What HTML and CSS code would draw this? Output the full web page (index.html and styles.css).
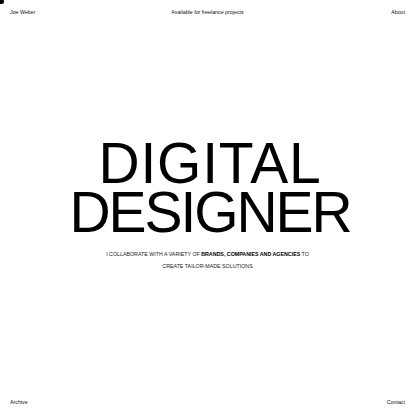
FILE: index.html
```html
<!DOCTYPE html>
<html>
<head>
<meta charset="utf-8">
<link rel="stylesheet" href="styles.css">
</head>
<body>
<div class="dot"></div>
<div class="page">
  <header class="bar">
    <span>Joe Weber</span>
    <span class="mid">Available for freelance projects</span>
    <span class="right">About</span>
  </header>
  <main class="hero">
    <h1 class="title"><span class="l1">DIGITAL</span><span class="l2">DESIGNER</span></h1>
    <p class="sub">I COLLABORATE WITH A VARIETY OF <b>BRANDS, COMPANIES AND AGENCIES</b> TO<br>CREATE TAILOR-MADE SOLUTIONS</p>
  </main>
  <footer class="bar">
    <span>Archive</span>
    <span class="right">Contact</span>
  </footer>
</div>
</body>
</html>
```
FILE: styles.css
```css
html, body { margin: 0; padding: 0; background: #fff; }
body { font-family: "Liberation Sans", Arial, sans-serif; color: #111; }
.dot { position: absolute; left: -1px; top: -1px; width: 5px; height: 5px; background: #000; border-radius: 50%; }
.page { height: 415px; display: flex; flex-direction: column; box-sizing: border-box; padding: 8px 10px 9px; }
.bar { display: flex; justify-content: space-between; font-size: 5.3px; line-height: 8px; }
.bar span { flex: 1; }
.bar .mid { text-align: center; }
.bar .right { text-align: right; }
.hero { flex: 1; display: flex; flex-direction: column; align-items: center; justify-content: center; padding-bottom: 4px; }
.title { margin: 0; font-weight: 400; font-size: 57px; line-height: 49px; text-align: center; color: #000; display: flex; flex-direction: column; align-items: center; }
.l1 { letter-spacing: 0.8px; margin-left: 5px; }
.l2 { letter-spacing: -2.1px; margin-left: 5px; }
.sub { margin: 11px 0 0; font-size: 5.3px; line-height: 12px; text-align: center; color: #1a1a1a; }
.sub b { font-weight: 700; color: #000; }
```
